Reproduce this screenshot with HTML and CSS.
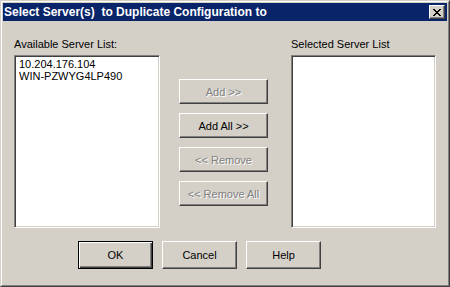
FILE: index.html
```html
<!DOCTYPE html>
<html>
<head>
<meta charset="utf-8">
<link rel="stylesheet" href="styles.css">
</head>
<body>
<div class="window">
  <div class="frame">
    <div class="titlebar">
      <span class="title">Select Server(s)  to Duplicate Configuration to</span>
      <div class="close">
        <svg width="8" height="7" viewBox="0 0 8 7" shape-rendering="crispEdges">
          <g fill="#000">
            <rect x="0" y="0" width="2" height="1"/><rect x="6" y="0" width="2" height="1"/>
            <rect x="1" y="1" width="2" height="1"/><rect x="5" y="1" width="2" height="1"/>
            <rect x="2" y="2" width="4" height="1"/>
            <rect x="3" y="3" width="2" height="1"/>
            <rect x="2" y="4" width="4" height="1"/>
            <rect x="1" y="5" width="2" height="1"/><rect x="5" y="5" width="2" height="1"/>
            <rect x="0" y="6" width="2" height="1"/><rect x="6" y="6" width="2" height="1"/>
          </g>
        </svg>
      </div>
    </div>
    <div class="body">
      <div class="columns">
        <div class="col col-left">
          <div class="label">Available Server List:</div>
          <div class="listbox">
            <div class="item">10.204.176.104</div>
            <div class="item">WIN-PZWYG4LP490</div>
          </div>
        </div>
        <div class="actions">
          <div class="btn action disabled">Add &gt;&gt;</div>
          <div class="btn action">Add All &gt;&gt;</div>
          <div class="btn action disabled">&lt;&lt; Remove</div>
          <div class="btn action disabled">&lt;&lt; Remove All</div>
        </div>
        <div class="col col-right">
          <div class="label">Selected Server List</div>
          <div class="listbox"></div>
        </div>
      </div>
      <div class="footer">
        <div class="btn dlg default">OK</div>
        <div class="btn dlg">Cancel</div>
        <div class="btn dlg">Help</div>
      </div>
    </div>
  </div>
</div>
</body>
</html>
```
FILE: styles.css
```css
* { box-sizing: border-box; }
html, body { margin: 0; padding: 0; background: #d4d0c8; }
body { font-family: "Liberation Sans", Arial, sans-serif; font-size: 11px; color: #000; }

.window {
  width: 450px;
  height: 287px;
  border: 1px solid;
  border-color: #d4d0c8 #404040 #404040 #d4d0c8;
  background: #d4d0c8;
}
.frame {
  height: 100%;
  border: 1px solid;
  border-color: #fff #808080 #808080 #fff;
  padding: 1px;
  display: flex;
  flex-direction: column;
}
.titlebar {
  height: 18px;
  background: #0a246a;
  display: flex;
  align-items: center;
  justify-content: space-between;
  padding: 0 2px 0 1px;
}
.title {
  color: #fff;
  font-weight: bold;
  font-size: 12px;
  white-space: pre;
  line-height: 18px;
}
.close {
  width: 16px;
  height: 14px;
  background: #d4d0c8;
  border-top: 1px solid #fff;
  border-left: 1px solid #fff;
  border-right: 1px solid #404040;
  border-bottom: 1px solid #404040;
  box-shadow: inset -1px -1px #808080;
  display: flex;
  align-items: center;
  justify-content: center;
  padding-right: 1px;
}
.close svg { display: block; }

.body {
  flex: 1;
  padding: 17px 11px 0 11px;
}
.columns {
  display: flex;
}
.col-left { width: 146px; }
.actions {
  width: 89px;
  margin-left: 19px;
  margin-right: 23px;
  padding-top: 41px;
  display: flex;
  flex-direction: column;
  gap: 9px;
}
.col-right { width: 145px; }
.label {
  line-height: 13px;
  height: 13px;
  margin-bottom: 4px;
}
.listbox {
  height: 173px;
  background: #fff;
  border: 1px solid;
  border-color: #808080 #fff #fff #808080;
  box-shadow: inset 1px 1px #404040, inset -1px -1px #d4d0c8;
  padding: 2px 2px;
}
.item {
  line-height: 12px;
  padding-left: 2px;
  white-space: nowrap;
}

.btn {
  background: #d4d0c8;
  border: 1px solid;
  border-color: #fff #404040 #404040 #fff;
  box-shadow: inset -1px -1px #808080;
  display: flex;
  align-items: center;
  justify-content: center;
  white-space: nowrap;
}
.action { height: 25px; }
.disabled {
  color: #808080;
  text-shadow: 1px 1px 0 #fff;
}
.footer {
  margin-top: 13px;
  padding-left: 64px;
  display: flex;
  gap: 9px;
}
.dlg {
  width: 75px;
  height: 28px;
}
.default {
  border: 1px solid #000;
  box-shadow: inset 1px 1px #fff, inset -1px -1px #404040, inset -2px -2px #808080;
}
```
